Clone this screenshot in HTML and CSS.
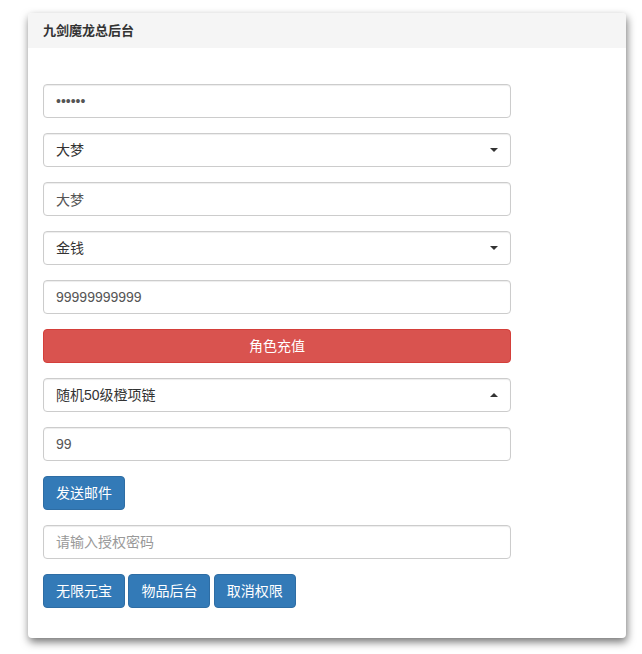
FILE: index.html
```html
<!DOCTYPE html>
<html>
<head>
    <meta charset="utf-8">
    <title>九剑魔龙总后台</title>
    <link rel="stylesheet" href="styles.css">
</head>
<body>
    <div class="page">
        <div class="panel">
            <div class="panel-heading">九剑魔龙总后台</div>
            <div class="panel-body">
                <div class="form">
                    <div class="form-group">
                        <input type="password" class="form-control" value="123456">
                    </div>
                    <div class="form-group select-wrap">
                        <div class="form-control">大梦</div>
                        <span class="caret"></span>
                    </div>
                    <div class="form-group">
                        <input type="text" class="form-control" value="大梦">
                    </div>
                    <div class="form-group select-wrap">
                        <div class="form-control">金钱</div>
                        <span class="caret"></span>
                    </div>
                    <div class="form-group">
                        <input type="text" class="form-control" value="99999999999">
                    </div>
                    <div class="form-group">
                        <button class="btn btn-danger btn-block">角色充值</button>
                    </div>
                    <div class="form-group select-wrap">
                        <div class="form-control">随机50级橙项链</div>
                        <span class="caret caret-up"></span>
                    </div>
                    <div class="form-group">
                        <input type="text" class="form-control" value="99">
                    </div>
                    <div class="form-group">
                        <button class="btn btn-primary">发送邮件</button>
                    </div>
                    <div class="form-group">
                        <input type="text" class="form-control" placeholder="请输入授权密码">
                    </div>
                    <div class="form-group btn-row">
                        <button class="btn btn-primary">无限元宝</button>
                        <button class="btn btn-primary">物品后台</button>
                        <button class="btn btn-primary">取消权限</button>
                    </div>
                </div>
            </div>
        </div>
    </div>
</body>
</html>
```

FILE: styles.css
```css
body {
    margin: 0;
    background: #fff;
    font-family: "Liberation Sans", Arial, "Noto Sans CJK SC", sans-serif;
    font-size: 14px;
    color: #333;
}

.page {
    padding: 13px 16px 17px 28px;
}

.panel {
    width: 598px;
    background: #fff;
    border-radius: 4px;
    box-shadow: 1px 4px 8px rgba(0, 0, 0, 0.55);
}

.panel-heading {
    height: 35px;
    line-height: 35px;
    padding: 0 15px;
    background: #f5f5f5;
    border-radius: 4px 4px 0 0;
    font-size: 13px;
    font-weight: bold;
    color: #333;
}

.panel-body {
    padding: 36px 15px 15px 15px;
}

.form {
    width: 468px;
}

.form-group {
    margin-bottom: 15px;
}

.form-control {
    display: block;
    box-sizing: border-box;
    width: 100%;
    height: 34px;
    padding: 6px 12px;
    font-family: inherit;
    font-size: 14px;
    line-height: 20px;
    color: #555;
    background: #fff;
    border: 1px solid #ccc;
    border-radius: 4px;
    box-shadow: inset 0 1px 1px rgba(0, 0, 0, 0.075);
}

.form-control::placeholder {
    color: #999;
}

.select-wrap {
    position: relative;
}

.select-wrap .form-control {
    color: #333;
}

.caret {
    position: absolute;
    right: 13px;
    top: 15px;
    width: 0;
    height: 0;
    border-left: 4px solid transparent;
    border-right: 4px solid transparent;
    border-top: 4px solid #333;
}

.caret-up {
    border-top: none;
    border-bottom: 4px solid #333;
}

.btn {
    display: inline-block;
    box-sizing: border-box;
    height: 34px;
    padding: 6px 12px;
    font-family: inherit;
    font-size: 14px;
    line-height: 20px;
    color: #fff;
    border: 1px solid transparent;
    border-radius: 4px;
    cursor: pointer;
}

.btn-block {
    display: block;
    width: 100%;
}

.btn-primary {
    background: #337ab7;
    border-color: #2e6da4;
}

.btn-danger {
    background: #d9534f;
    border-color: #d43f3a;
}

.btn-row .btn {
    margin-right: -0.5px;
}
```
